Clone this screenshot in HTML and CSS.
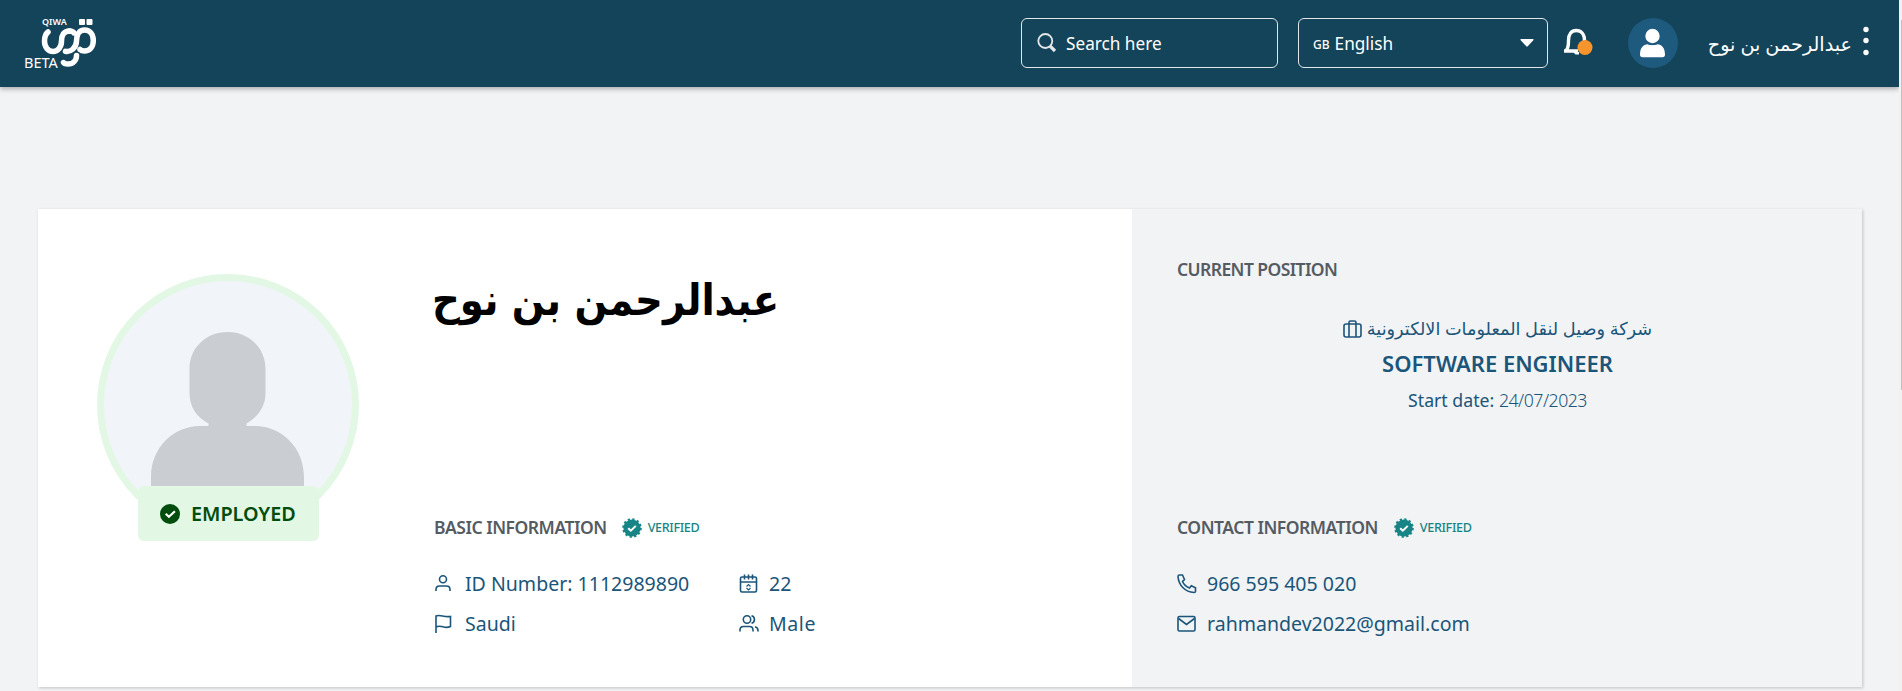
FILE: index.html
```
<!DOCTYPE html>
<html lang="en">
<head>
<meta charset="utf-8">
<title>Qiwa</title>
<link rel="stylesheet" href="styles.css">
</head>
<body>
<div class="scrollbar"><div class="thumb"></div></div>
<header class="topbar">
  <div class="logo">
    <span class="logo-qiwa">QIWA</span>
    <span class="logo-beta">BETA</span>
    <svg class="logo-mark" width="56" height="50" viewBox="0 0 56 50" fill="none" stroke="#fff" stroke-width="5.500" stroke-linecap="round">
      <path d="M7 13C4.500 15 3.500 18 3.500 22C3.500 28 7 32.500 12 32.500C17 32.500 20.500 28 20.500 22C20.500 16 23 12 28.500 12"/>
      <path d="M28.500 12C31 12 32.500 13 33 14"/>
      <path d="M24.500 32.300C29 33.500 35.500 29 35.500 22C35.500 15.500 38.500 11 43.500 11C49 11 52.300 15.500 52.300 21.500C52.300 28 48.500 32 43.500 32C41.500 32 40 31.500 39 30.500"/>
      <path d="M35.500 36.500C35.500 41.500 32 45 27 45C25 45 23 44.500 22.500 43.500"/>
      <rect x="38" y="0" width="6" height="6" rx="1" fill="#fff" stroke="none"/>
      <rect x="45.500" y="0" width="6" height="6" rx="1" fill="#fff" stroke="none"/>
    </svg>
  </div>
  <div class="field search">
    <svg width="20" height="20" viewBox="0 0 20 20" fill="none" stroke="#e4e6e8"><circle cx="8.300" cy="8" r="7" stroke-width="1.800"/><path d="M13 13l5 5" stroke-width="3.200"/></svg>
    <span class="t-search">Search here</span>
  </div>
  <div class="field lang">
    <span class="t-gb">GB</span><span class="t-english">English</span>
    <svg class="caret" width="14" height="8" viewBox="0 0 14 8"><path d="M1 0h12q1 .5 .3 1.300l-5.600 6q-.7 .7-1.400 0l-5.600-6Q0 .5 1 0z" fill="#fff"/></svg>
  </div>
  <svg class="bell" width="32" height="28" viewBox="0 0 32 28"><path d="M3 22.500C5.500 20.500 5.500 17 5.500 12.500C5.500 6 8.500 2.500 13.300 2.500C18 2.500 21.500 6 21.500 12.500V17M1 23H15" fill="none" stroke="#fff" stroke-width="3.400"/><path d="M10 24h6v2.500h-3.500z" fill="#fff"/><circle cx="22" cy="19.500" r="7.500" fill="#f7952c"/></svg>
  <svg class="user" width="50" height="50" viewBox="0 0 50 50"><circle cx="25" cy="25" r="25" fill="#1d5a7e"/><circle cx="24.500" cy="18" r="7.200" fill="#fff"/><path d="M12 36.500C12 30 15.500 26.300 19.500 26.300C22 27.500 27 27.500 29.500 26.300C33.500 26.300 37 30 37 36.500Q37 39.300 34.500 39.300H14.500Q12 39.300 12 36.500z" fill="#fff"/></svg>
  <div class="header-name" dir="rtl" lang="ar">عبدالرحمن بن نوح</div>
  <svg class="dots" width="6" height="30" viewBox="0 0 6 30" fill="#fff"><circle cx="3" cy="3.500" r="2.700"/><circle cx="3" cy="14.500" r="2.700"/><circle cx="3" cy="26.500" r="2.700"/></svg>
</header>
<main class="card">
  <section class="left">
    <div class="portrait">
      <svg class="face" width="262" height="262" viewBox="0 0 262 262"><circle cx="131" cy="131" r="127.500" fill="#f1f5f9" stroke="#e2f7e4" stroke-width="7"/><path d="M54 225V203C54 173 77 152 103 152H111.500V149.500C99 143 92.500 132 92.500 119V95C92.500 74 109 58 130.500 58C152 58 168.500 74 168.500 95V119C168.500 132 162 142 149.500 149.500V152H158C185 152 207 174 207 203V225z" fill="#cacdd1"/></svg>
      <div class="status"><svg width="20" height="20" viewBox="0 0 20 20"><circle cx="10" cy="10" r="10" fill="#004d0e"/><path d="M5.700 9.800l3.200 2.900 6-5.400" fill="none" stroke="#fff" stroke-width="2.200"/></svg><span class="t-employed">EMPLOYED</span></div>
    </div>
    <div class="details">
      <h1 class="name" dir="rtl" lang="ar">عبدالرحمن بن نوح</h1>
      <div class="heading"><h2 class="t-basic">BASIC INFORMATION</h2><svg class="seal" width="20" height="20" viewBox="0 0 20 20"><use href="#seal"/></svg><span class="t-verified">VERIFIED</span></div>
      <div class="facts">
        <div class="fact"><svg class="ic" viewBox="0 0 20 20"><circle cx="9" cy="5.300" r="3.500"/><path d="M2 17V15.500Q2 12 5.500 12h7Q16 12 16 15.500V17"/></svg><span class="t-id">ID Number: 1112989890</span></div>
        <div class="fact"><svg class="ic" viewBox="0 0 20 20"><rect x="1.500" y="3" width="16" height="15" rx="1.500"/><path d="M1.500 8h16M5.500 .5v5M9.500 .5v5M13.500 .5v5"/><path d="M7.500 12.500l2-2 2 2M7.500 14l2 2 2-2" stroke-width="1.100"/></svg><span class="t-age">22</span></div>
        <div class="fact"><svg class="ic" viewBox="0 0 20 20"><path d="M2 19V2Q4 1 8.500 2T16.500 2.500V12.500Q13 14 9 12.800T2 13"/></svg><span class="t-saudi">Saudi</span></div>
        <div class="fact"><svg class="ic" viewBox="0 0 20 20"><circle cx="8" cy="5.500" r="3.700"/><path d="M1 17.500V16Q1 12.500 4.500 12.500h6Q14 12.500 14 16v1.500M12.500 1.800a3.800 3.800 0 0 1 0 7.400M16 12.700Q19 13.500 19 16.500v1"/></svg><span class="t-male">Male</span></div>
      </div>
    </div>
  </section>
  <section class="right">
    <h2 class="t-current">CURRENT POSITION</h2>
    <div class="job">
      <div class="company"><svg class="case" width="20" height="18" viewBox="0 0 20 18"><rect x="1" y="4" width="17" height="13" rx="2"/><path d="M6 17V2.500Q6 1 7.500 1h4Q13 1 13 2.500V17"/></svg><span class="t-company" dir="rtl" lang="ar">شركة وصيل لنقل المعلومات الالكترونية</span></div>
      <div class="title"><span class="t-title">SOFTWARE ENGINEER</span></div>
      <div class="date"><span class="t-start">Start date:</span> <span class="t-date">24/07/2023</span></div>
    </div>
    <div class="heading contact"><h2 class="t-contact">CONTACT INFORMATION</h2><svg class="seal" width="20" height="20" viewBox="0 0 20 20"><use href="#seal"/></svg><span class="t-verified">VERIFIED</span></div>
    <div class="facts single">
      <div class="fact"><svg class="ic" viewBox="0 0 20 20"><path d="M2.500 1H5.500L7.500 5.500L5.500 7.500Q7.500 12 12.500 14L14.300 11.800L18.500 13.800V17.500Q18.500 18.500 17 18.500C8 18 1.500 11 1 2.500Q1 1 2.500 1z"/></svg><span class="t-phone">966 595 405 020</span></div>
      <div class="fact"><svg class="ic" viewBox="0 0 20 20"><rect x="1" y="2.500" width="17" height="14.500" rx="1.500"/><path d="M1.500 4.500L9.500 10.500L17.500 4.500"/></svg><span class="t-mail">rahmandev2022@gmail.com</span></div>
    </div>
  </section>
</main>
<svg class="defs" width="0" height="0"><defs><g id="seal"><circle cx="10" cy="10" r="8.600" fill="#178585"/><circle cx="10" cy="10" r="8.700" fill="none" stroke="#178585" stroke-width="2.200" stroke-dasharray="2.280 2.280"/><path d="M6.200 10.200l2.600 2.500 5-4.800" fill="none" stroke="#fff" stroke-width="2"/></g></defs></svg>
</body>
</html>
```
FILE: styles.css
```
* { box-sizing: border-box; margin: 0; padding: 0; }
body { width: 1902px; height: 691px; overflow: hidden; background: #f1f3f5; color: #1b5579; font-family: "Noto Sans", "Open Sans", "DejaVu Sans", sans-serif; }
span, h1, h2 { white-space: nowrap; }
svg { display: block; flex: none; }
.defs { position: absolute; }
.scrollbar { position: absolute; right: 0; top: 0; width: 3px; height: 691px; padding-top: 20px; background: #f1f1f1; }
.thumb { margin-left: 2px; height: 370px; background: #c1c1c1; }
.topbar { display: flex; align-items: flex-start; width: 1899px; height: 87px; padding-top: 18px; background: #144459; box-shadow: 0 2px 5px rgba(0,0,0,.3); color: #fff; }
.logo { position: relative; width: 72px; height: 50px; margin-left: 24px; }
.logo-mark { position: absolute; left: 17px; top: 1px; }
.logo-qiwa { position: absolute; left: 18px; top: -1px; font-size: 9px; line-height: 10px; font-weight: 600; }
.logo-beta { position: absolute; left: 0; top: 36px; font-size: 14.500px; line-height: 16px; }
.field { display: flex; align-items: center; height: 50px; border: 1px solid #e2e7ea; border-radius: 6px; }
.search { width: 257px; margin-left: 925px; padding-left: 15px; gap: 9px; }
.lang { width: 250px; margin-left: 20px; padding: 0 13px 0 14px; }
.t-search, .t-english { font-size: 17.200px; font-weight: 400; }
.t-gb { font-size: 12px; font-weight: 500; margin: 3px 5px 0 0; }
.caret { margin-left: auto; }
.bell { margin: 10px 0 0 15px; }
.user { margin-left: 33px; }
.header-name { width: 144px; margin: 12px 0 0 30px; font-size: 19.200px; line-height: 28px; white-space: nowrap; }
.dots { margin: 8px 0 0 11px; }
.card { display: flex; width: 1824px; height: 478px; margin: 122px 0 0 38px; box-shadow: 1px 1px 3px rgba(0,0,0,.2); }
.left { display: flex; width: 1094px; background: #fff; }
.portrait { width: 262px; margin: 65px 0 0 59px; }
.status { position: relative; display: flex; align-items: center; width: 181px; height: 55px; margin: -50px 0 0 41px; padding-left: 22px; gap: 11px; background: #e2f7e4; border-radius: 6px; color: #004d0e; }
.t-employed { font-size: 19.800px; font-weight: 600; }
.details { width: 600px; margin-left: 75px; }
.name { width: 345px; height: 70px; margin-top: 56px; color: #000; font-family: "DejaVu Sans Condensed", "DejaVu Sans", sans-serif; font-stretch: condensed; font-size: 42.900px; line-height: 70px; font-weight: 700; }
.heading { display: flex; align-items: center; height: 24px; margin-top: 180px; }
h2 { color: #555b62; font-size: 17.500px; line-height: 24px; font-weight: 600; letter-spacing: -.48px; }
.t-current { letter-spacing: -.58px; }
.seal { margin: 1px 6px 0 16px; }
.t-basic + .seal { margin-left: 15px; }
.t-verified { color: #178585; font-size: 12.600px; font-weight: 500; letter-spacing: -.35px; }
.facts { display: grid; grid-template-columns: 305px 200px; grid-auto-rows: 40px; margin-top: 24px; }
.single { grid-template-columns: 400px; }
.fact { display: flex; align-items: center; gap: 10px; font-size: 19.550px; }
.ic { width: 20px; height: 20px; margin-top: 2px; fill: none; stroke: #1b5579; stroke-width: 1.600; }
.t-id { margin-left: 1px; }
.t-saudi { margin-left: 1px; }
.t-male { letter-spacing: .6px; }
.right { width: 730px; padding: 48px 0 0 45px; background: #f1f3f5; }
.job { display: flex; flex-direction: column; align-items: center; width: 641px; margin-top: 31px; }
.company { display: flex; align-items: center; gap: 4px; height: 31px; font-size: 17.700px; }
.case { margin-top: 2px; fill: none; stroke: #1b5579; stroke-width: 1.600; }
.title { height: 40px; line-height: 40px; font-size: 22px; font-weight: 600; }
.date { height: 32px; line-height: 34px; font-size: 17.700px; }
.t-date { font-weight: 300; letter-spacing: -.5px; }
.contact { margin-top: 100px; }
```
